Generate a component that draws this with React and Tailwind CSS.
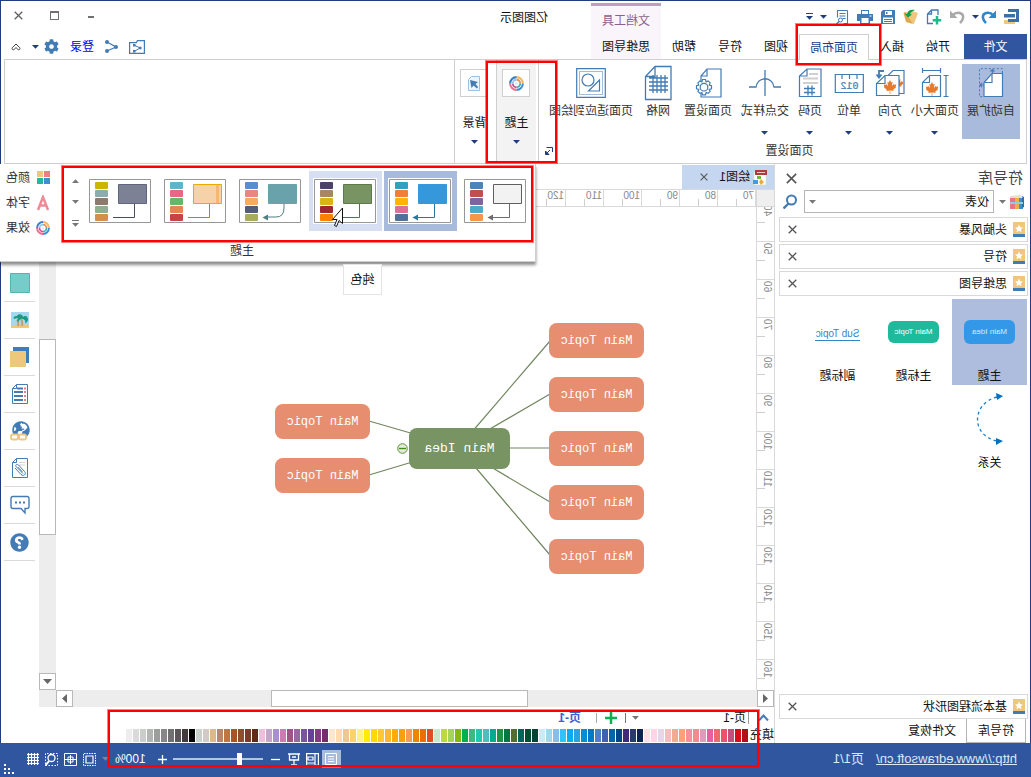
import React from "react";
import { FaCanadianMapleLeaf, FaQuestionCircle, FaGlobeAmericas, FaCog } from "react-icons/fa";

const BLUE = "#437bb5";

const Caret = ({ className = "text-[#1f3d7a]", up = false }) => (
  <svg width="7" height="4" viewBox="0 0 7 4" className={"shrink-0 " + className} aria-hidden="true">
    <path d={up ? "M0 4h7L3.500 .3z" : "M0 0h7L3.500 3.700z"} fill="currentColor" />
  </svg>
);

const Cross = ({ size = 9, className = "text-[#555]" }) => (
  <svg width={size} height={size} viewBox="0 0 9 9" className={className} aria-hidden="true">
    <path d="M.7 .7l7.600 7.600M8.300 .7L.7 8.300" stroke="currentColor" strokeWidth="1.300" fill="none" />
  </svg>
);

const Swirl = ({ size = 16 }) => (
  <svg width={size} height={size} viewBox="0 0 16 16" fill="none" aria-hidden="true">
    <path d="M8 1.200A6.800 6.800 0 0 0 1.200 8" stroke="#f3b95b" strokeWidth="2.200" />
    <path d="M1.200 8A6.800 6.800 0 0 0 8 14.800" stroke="#3d8fd1" strokeWidth="2.200" />
    <path d="M8 14.800A6.800 6.800 0 0 0 14.800 8" stroke="#e8738a" strokeWidth="2.200" />
    <path d="M14.800 8A6.800 6.800 0 0 0 8 1.200" stroke="#3a7fc0" strokeWidth="2.200" />
    <path d="M8 4A4 4 0 0 0 4 8" stroke="#ee8d5d" strokeWidth="2" />
    <path d="M4 8A4 4 0 0 0 8 12" stroke="#36b5a8" strokeWidth="2" />
    <path d="M8 12A4 4 0 0 0 12 8" stroke="#c1588f" strokeWidth="2" />
    <path d="M12 8A4 4 0 0 0 8 4" stroke="#8fc5ec" strokeWidth="2" />
    <circle cx="8" cy="8" r="1.500" fill="#d9ecf8" />
  </svg>
);

const quick = [
  ["新建", <svg key="n" width="16" height="16" viewBox="0 0 16 16" fill="none"><path d="M4 6V1h6.500L14.500 5v9.500H9M10.500 1v4h4" stroke={BLUE} strokeWidth="1.300" /><path d="M5 7v8.500M.8 11.200h8.500" stroke="#1dba8c" strokeWidth="2.500" /></svg>],
  ["打开", <svg key="o" width="16" height="16" viewBox="0 0 16 16"><path d="M1 4l6-2 1 2 6-1-2 9-7 3z" fill="#eec77f" /><path d="M14 3l1.500 1-2.500 9-7 2z" fill="#dca94e" /><path d="M4 1c4-1 7 0 8 4l2.500-.5-3.500 4-4-3 2-.5C8 3 6 2 4 1z" fill="#12a04b" /></svg>],
  ["保存", <svg key="s" width="16" height="16" viewBox="0 0 16 16"><path d="M1 1h12l2 2v12H1z" fill={BLUE} /><path d="M4 2h7v4H4zM3 8.500h10V14H3z" fill="#fff" /><path d="M8.500 3h1.500v2H8.500zM4 10h8v1H4zM4 12h8v1H4z" fill={BLUE} /></svg>],
  ["打印", <svg key="p" width="16" height="16" viewBox="0 0 16 16"><path d="M4 1h8v4h4v7h-3v3H3v-3H0V5h4z" fill={BLUE} /><path d="M5 2h6v3H5zM4.500 9h7v5h-7z" fill="#fff" /><path d="M1.500 6.500h2v1h-2z" fill="#fff" /></svg>],
  ["预览", <svg key="v" width="16" height="16" viewBox="0 0 16 16" fill="none"><path d="M2.500 1.500h10v7M2.500 1.500v13h4M4.500 4.500h6M4.500 7h6M4.500 9.500h3" stroke={BLUE} strokeWidth="1.100" /><circle cx="9.500" cy="11" r="2" stroke={BLUE} /><path d="M11 12.500l2.500 2.500" stroke={BLUE} strokeWidth="1.500" /></svg>],
];

const Leaf = ({ x, y, s = 13 }) => <FaCanadianMapleLeaf x={x} y={y} size={s} color="#e57b2e" />;

const tools = [
  { label: "自动扩展", width: "w-[58px]", active: true, icon: (
    <svg width="26" height="30" viewBox="0 0 26 30" fill="none" stroke={BLUE}>
      <path d="M1.500 5.500h10.500l8 9v14H1.500z" fill="#fff" strokeWidth="1.200" />
      <path d="M12 5.500v9h8" strokeWidth="1.200" />
      <path d="M1.500 5V.7h23v28H20" strokeDasharray="2 2" />
      <path d="M11.500 5V1.500M9.500 3.500l2-2 2 2M20 17h4M22 15l2 2-2 2" strokeWidth="1.200" />
    </svg>) },
  { label: "页面大小", width: "w-[54px]", caret: true, icon: (
    <svg width="28" height="30" viewBox="0 0 28 30" fill="none" stroke={BLUE} strokeWidth="1.200">
      <path d="M8.500 2.500h18M8.500 0v5M26.500 0v5M3 7.500v21M.5 7.500h5M.5 28.500h5" />
      <path d="M8.500 7.500h11l7 7v14h-18zM19.500 7.500v7h7" />
      <g stroke="none"><Leaf x={10} y={14} s={14} /></g>
    </svg>) },
  { label: "方向", width: "w-[36px]", caret: true, icon: (
    <svg width="30" height="30" viewBox="0 0 30 30" fill="none" stroke={BLUE} strokeWidth="1.200">
      <path d="M1 2.500h11l6 6v17H1z" />
      <g stroke="none"><Leaf x={1} y={10} s={11} /></g>
      <path d="M6 7.500h14l8.500 8v12H6z" fill="#fff" /><path d="M20 7.500v8h8.500" />
      <g stroke="none"><Leaf x={8} y={12} s={14} /></g>
      <path d="M21 3h5v6M23.500 6.500l2.500 3 2.500-3" strokeWidth="1.800" />
    </svg>) },
  { label: "单位", width: "w-[46px]", caret: true, icon: (
    <svg width="30" height="30" viewBox="0 0 30 30" fill="none" stroke={BLUE} strokeWidth="1.200">
      <path d="M.7 6.500h28v18H.7zM7 7v4M14.500 7v4M22 7v4" />
      <text x="14.500" y="21" textAnchor="middle" fontSize="10" fontFamily="Liberation Mono, monospace" fill={BLUE} strokeWidth=".2">012</text>
    </svg>) },
  { label: "页码", width: "w-[32px]", caret: true, icon: (
    <svg width="24" height="30" viewBox="0 0 24 30" fill="none" stroke={BLUE} strokeWidth="1.200">
      <path d="M1 1h14l7.500 7v20.500H1zM15 1v7h7.500" />
      <path d="M4 6h9M4 10.500h15M4 15h15" stroke="#cfcfcf" strokeWidth="2" />
      <path d="M10 17.500v10M14 17.500v10M7 20.500h11M7 24.500h11" strokeWidth="1.300" />
    </svg>) },
  { label: "交点样式", width: "w-[58px]", caret: true, icon: (
    <svg width="34" height="30" viewBox="0 0 34 30" fill="none" stroke={BLUE} strokeWidth="1.300">
      <path d="M17 2v26M1 19h7c2-11 16-11 18 0h7" />
    </svg>) },
  { label: "页面设置", width: "w-[56px]", icon: (
    <svg width="28" height="32" viewBox="0 0 28 32" fill="none" stroke={BLUE} strokeWidth="1.200">
      <path d="M1 2h14l6 7v21H1zM15 2v7h6" />
      <path d="M16.500 12.500h3l.6 2.300 2-.9 2 2-.9 2.100 2.300.7v3l-2.300.7.9 2-2 2-2-.9-.6 2.300h-3l-.6-2.300-2 .9-2-2 .9-2-2.300-.7v-3l2.300-.7-.9-2.100 2-2 2 .9z" fill="#fff" />
      <circle cx="18" cy="20.200" r="3.800" />
    </svg>) },
  { label: "网格", width: "w-[44px]", icon: (
    <svg width="28" height="36" viewBox="0 0 28 36" fill="none" stroke={BLUE} strokeWidth="1.300">
      <path d="M1 1.500h16l9.500 10v23H1zM17 1.500v10h9.500M4 13h19M4 17h19M4 21h19M4 25h19M7 10v18M11 10v18M15 10v18M19 10v18" />
    </svg>) },
  { label: "页面适应到绘图", width: "w-[90px]", icon: (
    <svg width="30" height="30" viewBox="0 0 30 30" fill="none" stroke={BLUE} strokeWidth="1.200">
      <path d="M.7 .7h28.600v28.600H.7z" />
      <path d="M3.500 3.500h23v23h-23z" strokeDasharray="1 1" strokeWidth="1" />
      <circle cx="18" cy="12" r="6" /><path d="M6.500 12v11h11z" />
    </svg>) },
];

const themes = [
  { fill: "#f2f2f2", line: "#6c6c6c", stroke: "#5f5f5f", arrow: true, sw: ["#4f81bd", "#c0504d", "#8064a2", "#4bacc6", "#f79646"], cell: "" },
  { fill: "#3498db", line: "#2a76a5", stroke: "#3498db", arrow: true, sw: ["#2fa2c0", "#f07f35", "#ffb400", "#de6f9b", "#51719a"], cell: "bg-[#a9bbdd]" },
  { fill: "#789463", line: "#55753f", stroke: "#5f7a4a", arrow: false, sw: ["#4b4169", "#a98566", "#d8b616", "#9b2833", "#ff8000"], cell: "bg-[#d6e0f2]" },
  { fill: "#69a2aa", line: "#4e7f85", stroke: "#69a2aa", arrow: true, round: true, sw: ["#5b8dcc", "#e98583", "#f7ab5f", "#535e76", "#a8ab5b"], cell: "" },
  { fill: "#f6d2aa", line: "#b08a10", stroke: "#eaaa00", arrow: false, band: "#f3b875", sw: ["#60b3cd", "#e96880", "#67b76b", "#e68651", "#c84343"], cell: "" },
  { fill: "#7d8196", line: "#4a4f60", stroke: "#5f6480", arrow: false, sw: ["#ccb400", "#8aacac", "#8c7a6c", "#8eb090", "#d2904b"], cell: "" },
];

const Thumb = ({ t }) => (
  <svg width="64" height="46" viewBox="-1 -1 64 46" fill="none">
    <path d="M-1-1h64v46H-1z" fill="#fff" />
    <path d="M.5 .5h61v43H.5z" stroke="#979797" />
    <path d="M4.500 5.500h28v19h-28z" fill={t.fill} stroke={t.stroke} />
    {t.band && <path d="M7 6h3v18H7z" fill={t.band} />}
    {t.sw.map((c, i) => <rect key={c} x="43" y={3 + i * 8} width="13" height="7" rx="1" fill={c} />)}
    <path d={t.round ? "M17 25v4q0 9 8 9h9" : "M16.500 25v13.500H38"} stroke={t.line} />
    {t.arrow && <path d="M33 35.500v6l5.500-3z" fill={t.line} />}
  </svg>
);

const swatches = "b30d1a dc0c1d c4507c e9546b f0696f e85fa0 e29abb f08d8c f29199 ffa07a f2ab93 f6bdbd e8d5e8 ffd5e6 fde0e4 0b2350 253a6e 402a7c 004588 0066a8 3d63ae 4f80c5 007ac8 008dd2 2aa4de 00aff0 2dc4f8 87bfea 9dd8ee cde9f4 004433 005030 006657 556b2f 007a42 1e9444 00ab96 4dbdc0 1dcaae 3eb87c 00b04f 7fba16 a6d25f bcd845 cde8c9 e14e23 f06c00 f08300 f59b57 f3a20a ffad00 fbb53a fdc931 ffd800 ffec00 fdf286 fdd26c edc88f ffdcab fde6d0 752a74 863a86 6a3f98 7a549e 9a66a4 a0528a cd7bb2 a88fd0 c5a5cb eebfdb 5f2a1c 7a3a2c 924e2c a85424 c2763f b8866c dfb888 d2cac5 c9d2ca 000000 433a3c 5a5658 707070 878787 9c9e9c b3b5b3 cbcdcb dadada ededed".split(" ");

const StarBook = () => (
  <svg width="12" height="15" viewBox="0 0 12 15" aria-hidden="true">
    <path d="M0 0h12v12H0z" fill="#eec67c" /><path d="M0 12h12v3H0z" fill={BLUE} />
    <path d="M6 2.500l1.200 2.700 2.800.3-2.100 1.900.6 2.800L6 8.700l-2.500 1.500.6-2.800L2 5.500l2.800-.3z" fill="#fff" />
  </svg>
);

const Category = ({ name }) => (
  <div className="flex h-[25px] items-center border border-[#d9d9d9] bg-white pr-2 pl-0.5">
    <StarBook />
    <span className="ml-1.5 flex-1">{name}</span>
    <button aria-label={"关闭" + name}><Cross /></button>
  </div>
);

const sideIcons = [
  ["填充", <svg key="a" width="20" height="20"><path d="M.5 .5h19v19H.5z" fill="#75ccc8" stroke="#52b5b0" /></svg>],
  ["图片", <svg key="b" width="20" height="18" viewBox="0 0 20 18"><path d="M1 1h18v16H1z" fill="#a5d8ee" /><path d="M1 14q9-2 18 1v2H1z" fill="#eec67c" /><path d="M8 15q-1-5 2-9M12 15q-1-4 1-6" stroke="#c99a68" strokeWidth="1.800" fill="none" /><path d="M2 9c0-4 3-5 5-3 0-3 5-4 6-1 3 0 4 1 3 3-2-1-3-1-4-1 1 2 1 3 0 4-2-3-3-4-5-3s-3 2-2 4c-2 0-2-1-3-3z" fill="#1a9a80" /></svg>],
  ["图层", <svg key="c" width="20" height="20"><path d="M1 0h16v16H1z" fill={BLUE} /><path d="M4 4h16v16H4z" fill="#eec67c" /></svg>],
  ["备注", <svg key="d" width="18" height="20" viewBox="0 0 18 20" fill="none"><path d="M1.500 .5h11l4 4v15h-15zM12.500 .5v4h4" stroke={BLUE} /><path d="M6 4.500h6M6 8h9M6 12h9M6 16h9" stroke={BLUE} strokeWidth="2" /><path d="M3 4.500h2M3 8h2M3 12h2M3 16h2" stroke="#ea7f8b" strokeWidth="2" /></svg>],
  ["超链接", <span key="e" className="relative block h-5 w-5"><FaGlobeAmericas size={18} color={BLUE} /><svg className="absolute right-0 bottom-0" width="17" height="8" viewBox="0 0 17 8" fill="none" stroke="#eec67c" strokeWidth="1.800"><rect x="1" y="1.500" width="7" height="5" rx="1.500" fill="#fff" /><rect x="9" y="1.500" width="7" height="5" rx="1.500" fill="#fff" /></svg></span>],
  ["附件", <svg key="f" width="18" height="20" viewBox="0 0 18 20" fill="none"><path d="M1.500 .5h11l4 4v15h-15zM12.500 .5v4h4" stroke={BLUE} /><path d="M4 4.500h6M4 7h6" stroke="#d5d5d5" /><path d="M6 15.500l6.500-6.500c2-2-.5-3.500-2-2l-6 6.500c-2.500 2.500 1 5.500 3.500 3l6-6.500M6.500 14l4.500-4.800" stroke={BLUE} /></svg>],
  ["批注", <svg key="g" width="20" height="20" viewBox="0 0 20 20" fill="none"><path d="M3 1.500h14q2 0 2 2v8q0 2-2 2H9L5 18v-4.500H3q-2 0-2-2v-8q0-2 2-2z" stroke={BLUE} strokeWidth="1.400" /><path d="M5 6.500h2v2H5zM9 6.500h2v2H9zM13 6.500h2v2h-2z" fill={BLUE} /></svg>],
  ["帮助", <FaQuestionCircle key="h" size={19} color={BLUE} />],
];

const topics = [
  "left-[112px] top-[116px]", "left-[112px] top-[170px]", "left-[112px] top-[224px]",
  "left-[112px] top-[278px]", "left-[112px] top-[332px]", "left-[386px] top-[197px]", "left-[386px] top-[251px]",
];

const hTicks = [70, 80, 90, 100, 110, 120, 130, 140, 150, 160, 170, 180, 190, 200];
const vTicks = [40, 50, 60, 70, 80, 90, 100, 110, 120, 130, 140, 150, 160];
const redBox = "pointer-events-none absolute z-30 border-2 border-[#ff0000] ring-1 ring-[#ff0000]/50";

export default function App() {
  return (
    <div className="relative flex min-h-screen -scale-x-100 flex-col overflow-hidden bg-white font-['Liberation_Sans','Noto_Sans_CJK_SC',sans-serif] text-xs leading-4 text-[#111]">
      <header className="border-x border-t border-[#1f3d7a]">
        <div className="flex h-[33px]">
          <div className="flex w-[369px] items-center gap-[7px] pl-2.5 pb-0.5">
            <svg width="16" height="16" viewBox="0 0 16 16"><path d="M5 11h11v4H5z" fill="#eec67c" /><path d="M1 0h11v3H1zM1 0h3v13H1zM5 5h11v3.500H5zM1 10h11v3H1z" fill="#3c6ea8" /></svg>
            <div className="flex w-[25px] items-center gap-[2px]">
              <button aria-label="撤销"><svg width="16" height="16" viewBox="0 0 16 16" fill="none"><path d="M3.500 6.500C8 1.500 15 4 14 9c-.3 2-1.500 3.500-3 5" stroke="#2f86c9" strokeWidth="2.500" /><path d="M1 1.500V9h7.500z" fill="#2f86c9" /></svg></button>
              <Caret />
            </div>
            <button aria-label="重做"><svg width="16" height="16" viewBox="0 0 16 16" fill="none"><path d="M12.500 6.500C8 1.500 1 4 2 9c.3 2 1.500 3.500 3 5" stroke="#a9a9a9" strokeWidth="2.500" /><path d="M15 1.500V9H7.500z" fill="#a9a9a9" /></svg></button>
            {quick.map(([n, i]) => <button key={n} aria-label={n}>{i}</button>)}
            <Caret />
            <span className="flex flex-col gap-0.5"><i className="block h-px w-[7px] bg-[#444]" /><Caret /></span>
          </div>
          <div className="mt-0.5 w-[70px] border-t-[3px] border-[#c59bc5] bg-[#faf5fa] pt-[7px] text-center leading-4 text-[#8f5f90]">文档工具</div>
          <h1 className="ml-[43px] flex-1 pt-[9px] leading-4">亿图图示</h1>
          <div className="flex text-[#707070]">
            <button className="grid w-9 place-items-center pb-0.5" aria-label="最小化"><i className="block h-0.5 w-1.5 bg-[#707070]" /></button>
            <button className="grid w-9 place-items-center pb-1" aria-label="最大化"><i className="block h-[9px] w-[9px] border border-t-2 border-[#707070]" /></button>
            <button className="grid w-9 place-items-center pb-1" aria-label="关闭"><Cross className="text-[#606060]" /></button>
          </div>
        </div>
        <div className="flex h-[25px] items-stretch">
          <button className="mr-[3px] ml-[3px] w-[63px] bg-[#3056a0] text-white">文件</button>
          <nav className="flex items-stretch">
            <button className="px-[11px]">开始</button>
            <button className="px-[11px]">插入</button>
            <button className="relative z-10 -mb-px border border-b-0 border-[#cfcfcf] bg-white px-[10px] text-[#1f3d8a]">页面布局</button>
            <button className="px-[11px]">视图</button>
            <button className="px-[11px]">符号</button>
            <button className="px-[11px]">帮助</button>
            <button className="bg-[#faf5fa] px-[11px]">思维导图</button>
          </nav>
          <div className="flex flex-1 items-center justify-end gap-[11px] pr-2.5">
            <button aria-label="分享到文件夹"><svg width="16" height="14" viewBox="0 0 16 14" fill="none"><path d="M.6 .6h7l1 2h6.800v10.800H.6z" stroke={BLUE} strokeWidth="1.200" /><path d="M11 5l-6 3 6 3.500" stroke={BLUE} /><path d="M9.500 4h2.500v2.500H9.500zM3.500 6.800H6v2.400H3.500zM9.500 10h2.500v2.500H9.500z" fill={BLUE} /></svg></button>
            <button aria-label="分享"><svg width="13" height="13" viewBox="0 0 13 13" fill="none"><path d="M11 2L2 7l9 4" stroke={BLUE} strokeWidth="1.300" /><circle cx="11" cy="2" r="2" fill={BLUE} /><circle cx="2" cy="7" r="2" fill={BLUE} /><circle cx="11" cy="11" r="2" fill={BLUE} /></svg></button>
            <a href="#login" className="text-[#0000ee]">登录</a>
            <button className="flex items-center gap-[5px]" aria-label="设置"><FaCog size={15} color={BLUE} /><Caret /></button>
            <button aria-label="收起功能区"><svg width="10" height="8" viewBox="0 0 10 8" fill="none" stroke="#444"><path d="M1 5.500q0-1 1-1.500l3-3 3 3q1 .5 1 1.500t-1.500 1.500L5 4.500 2.500 7Q1 6.500 1 5.500z" /></svg></button>
          </div>
        </div>
        <div className="mx-[3px] flex h-[105px] border border-[#cfcfcf]">
          <section className="flex w-[488px] flex-col border-r border-[#cfcfcf] text-[#333]">
            <div className="mt-1 ml-1.5 flex h-[75px]">
              {tools.map((t) => (
                <button key={t.label} className={"flex shrink-0 flex-col items-center pt-[3px] " + t.width + (t.active ? " bg-[#a9bbdd]" : "")}>
                  <span className="flex h-8 items-center justify-center">{t.icon}</span>
                  <span className="mt-1 leading-4 whitespace-nowrap">{t.label}</span>
                  {t.caret && <Caret className="mt-3 text-[#1f3d7a]" />}
                </button>
              ))}
            </div>
            <div className="flex h-6 items-center pr-1.5">
              <span className="flex-1 text-center">页面设置</span>
              <button aria-label="页面设置选项"><svg width="8" height="8" viewBox="0 0 8 8" fill="none" stroke="#1f3d7a"><path d="M.5 5V.5H6.500M3 3l3 3" /><path d="M7.500 4v3.500H4z" fill="#1f3d7a" /></svg></button>
            </div>
          </section>
          <button className="ml-0.5 flex w-10 flex-col items-center border-r border-[#cfcfcf] bg-[#f3f3f3] pt-[9px]">
            <span className="grid h-7 w-7 place-items-center border border-[#cfcfcf] bg-white"><Swirl size={15} /></span>
            <span className="mt-[18px]">主题</span>
            <Caret className="mt-[9px] text-[#1f3d7a]" />
          </button>
          <button className="flex w-[42px] flex-col items-center border-r border-[#cfcfcf] pt-[9px] pl-0.5">
            <span className="grid h-7 w-7 place-items-center border border-[#cfcfcf] bg-white"><svg width="12" height="15" viewBox="0 0 12 15" fill="none"><path d="M.5 .5h8l3 3v11H.5z" stroke="#9fbfe0" fill="#eef4fb" /><path d="M10 4l-1.500 8-2-2.500L3 12.500l-1-1.500 2.500-3L2 6z" fill={BLUE} /></svg></span>
            <span className="mt-[18px]">背景</span>
            <Caret className="mt-[9px] text-[#1f3d7a]" />
          </button>
        </div>
      </header>

      <section className="absolute top-[164px] right-0 z-20 flex h-[98px] w-[536px] border-b border-l border-[#cfcfcf] bg-white shadow-[0_3px_3px_rgba(0,0,0,0.45)]">
        <div className="flex w-[474px] flex-col">
          <div className="mt-[7px] ml-[3px] flex h-[60px] gap-0.5">
            {themes.map((t, i) => (
              <button key={i} aria-label={"主题 " + (i + 1)} className={"grid w-[73px] shrink-0 place-items-center " + t.cell}><Thumb t={t} /></button>
            ))}
            <div className="flex w-3 flex-col items-center justify-between pt-2 pb-1 text-[#777]">
              <button aria-label="上一行" className="grid h-1"><Caret up className="text-[#777]" /></button>
              <button aria-label="下一行" className="grid h-1"><Caret className="text-[#777]" /></button>
              <button aria-label="更多主题" className="flex flex-col gap-0.5"><i className="block h-px w-[7px] bg-[#777]" /><Caret className="text-[#777]" /></button>
            </div>
          </div>
          <span className="mt-3 ml-[281px] leading-4 text-[#333]">主题</span>
        </div>
        <div className="flex flex-1 flex-col gap-[5px] pt-1 pl-5 text-[#333]">
          <button className="flex h-5 items-center gap-1.5 whitespace-nowrap"><svg width="14" height="14" className="shrink-0"><path d="M0 0h6v6H0z" fill="#ea7f8b" /><path d="M7 0h6v6H7z" fill="#eec67c" /><path d="M0 7h6v6H0z" fill="#3d8fd1" /><path d="M7 7h6v6H7z" fill="#1dba9c" /></svg>颜色<Caret /></button>
          <button className="flex h-5 items-center gap-1.5 whitespace-nowrap"><svg width="14" height="16" viewBox="0 0 14 16" className="shrink-0" fill="none" stroke="#ee8b98" strokeWidth="2.500"><path d="M2 15L7 2l5 13M4 10.500h6" /></svg>字体<Caret /></button>
          <button className="flex h-5 items-center gap-1.5 whitespace-nowrap"><span className="shrink-0"><Swirl size={14} /></span>效果<Caret /></button>
        </div>
      </section>
      <div role="tooltip" className="absolute top-[264px] right-[343px] z-20 grid h-[31px] w-[39px] place-items-center border border-[#e4e4e4] bg-white">纯色</div>
      <svg className="absolute top-[207px] right-[331px] z-20" width="14" height="21" viewBox="0 0 14 21" aria-hidden="true"><path d="M2.500 1v15.500l3.500-3 2.500 6 2-1-2.500-6h4.500z" fill="#fff" stroke="#111" /></svg>

      <main className="flex flex-1 border-x border-[#1f3d7a]">
        <aside className="flex w-[256px] flex-col border-r border-[#d9d9d9] pr-1 pl-0.5">
          <div className="flex h-[26px] items-center justify-between pr-[7px] pl-[5px] pt-0.5 text-[15px] text-[#444]"><h2>符号库</h2><button aria-label="关闭符号库"><Cross size={11} /></button></div>
          <div className="mb-1 flex h-[23px] items-center pr-1 pl-1">
            <svg width="15" height="16" viewBox="0 0 15 16"><path d="M1 4h4v11H1z" fill="#3d8fd1" /><path d="M0 3l2-1v12l-2-1z" fill="#2d6fab" /><path d="M5 4h4v11H5z" fill="#f3b03f" /><path d="M9 3h5v12H9z" fill="#e8738a" /><path d="M1 4l3-3 10 1v2z" fill="#e9dcc8" /><path d="M1 8h13v2H1z" fill="#8fd0e0" /></svg>
            <span className="mr-[5px] ml-[3px]"><Caret className="text-[#777]" /></span>
            <div className="relative flex flex-1">
              <select aria-label="符号分类" className="h-[23px] w-full appearance-none border border-[#b5b5b5] bg-white pl-1" defaultValue="仪表"><option>仪表</option></select>
              <span className="pointer-events-none absolute top-2.5 right-[5px]"><Caret className="block text-[#777]" /></span>
            </div>
            <button aria-label="搜索" className="ml-1.5"><svg width="15" height="15" viewBox="0 0 15 15" fill="none" stroke={BLUE}><circle cx="6.500" cy="6" r="4.500" strokeWidth="2" /><path d="M9.500 9.500l5 5" strokeWidth="2.400" /></svg></button>
          </div>
          <div className="flex flex-col gap-0.5"><Category name="头脑风暴" /><Category name="符号" /><Category name="思维导图" /></div>
          <div className="mt-[3px] ml-px grid grid-cols-[75px_75px_75px] gap-x-px">
            <button className="flex h-[86px] flex-col items-center bg-[#aebcde]"><span className="mt-[21px] grid h-6 w-[51px] place-items-center rounded-md bg-[#3498e8] text-[8px] leading-3 text-[#d6ebfb]">Main Idea</span><span className="mt-6">主题</span></button>
            <button className="flex h-[86px] flex-col items-center"><span className="mt-[22px] grid h-[22px] w-[51px] place-items-center rounded-md bg-[#1fba9b] text-[8px] leading-3 text-white">Main Topic</span><span className="mt-[25px]">主标题</span></button>
            <button className="flex h-[86px] flex-col items-center"><span className="mt-7 h-[14px] border-b border-[#2f86c9] px-px text-[10px] leading-[14px] text-[#2f86c9]">Sub Topic</span><span className="mt-[27px]">副标题</span></button>
            <button className="flex h-[86px] flex-col items-center"><svg className="mt-[7px]" width="30" height="54" viewBox="0 0 30 54" fill="none"><path d="M7 5C32 11 34 43 7 49" stroke="#1f7fc6" strokeWidth="1.300" strokeDasharray="3 3" /><path d="M1 4l7-3-1 7zM1 49l7-3v7z" fill="#0070c0" /></svg><span className="mt-[9px]">关系</span></button>
          </div>
          <div className="mt-auto"><Category name="基本流程图形状" /></div>
          <div className="flex h-6 pl-0.5">
            <button className="w-[60px] border border-t-0 border-[#b5b5b5]">符号库</button>
            <button className="px-2.5">文件恢复</button>
          </div>
        </aside>

        <div className="flex min-w-0 flex-1 flex-col">
          <div className="flex h-[25px] pt-px">
            <div className="flex w-[92px] items-center bg-[#c5d7f0] pl-1.5">
              <svg width="16" height="15" viewBox="0 0 16 15"><path d="M2 2h12v13H2z" fill="#fff" stroke="#cdd9c8" strokeWidth=".6" /><path d="M1 0h12v5H1z" fill="#b23a3a" /><path d="M3 2h8v1H3z" fill="#f0c8c8" /><path d="M7 6h4v3H7z" fill="#6dbb45" /><path d="M4 12l3-3 2 3-2 3z" fill="#f3a83c" /><path d="M10 10h5v4h-5z" fill="#3d9be8" /></svg>
              <span className="ml-0.5 flex-1">绘图1</span>
              <button className="mr-[18px]" aria-label="关闭绘图1"><Cross size={8} /></button>
            </div>
          </div>
          <div className="flex h-[18px] overflow-hidden border-y border-[#d9d9d9]">
            <div className="w-[18px] shrink-0 border-r border-[#d9d9d9] bg-[#efefef]" />
            {hTicks.map((n) => (
              <div key={n} className="flex w-[38px] shrink-0 items-end border-l border-[#d9d9d9]">
                <span className="w-[18px] self-start pl-px text-[10px] leading-3 whitespace-nowrap text-[#888]">{n}</span>
                <i className="h-[7px] w-px bg-[#cfcfcf]" />
              </div>
            ))}
          </div>
          <div className="flex flex-1">
            <div className="relative w-[18px] shrink-0 overflow-hidden border-r border-[#d9d9d9]">
              <div className="absolute inset-x-0 -top-1">
                {vTicks.map((n) => (
                  <div key={n} className="relative h-[38px] border-t border-[#d9d9d9]">
                    <span className="absolute top-px left-px rotate-180 text-[10px] leading-3 text-[#888] [writing-mode:vertical-rl]">{n}</span>
                    <i className="absolute top-[18px] right-0 h-px w-2 bg-[#cfcfcf]" />
                  </div>
                ))}
              </div>
            </div>
            <div className="relative min-h-[480px] flex-1 overflow-hidden bg-white">
              <svg className="absolute inset-0" width="690" height="480" fill="none" stroke="#71875f" strokeWidth="1.200" aria-hidden="true">
                <path d="M206 134L297 240M206 187L297 240M206 241h40M206 295L297 241M206 348L297 241M387 214L297 240M387 268L297 241" />
              </svg>
              {topics.map((p) => <div key={p} className={"absolute grid h-[35px] w-[95px] place-items-center rounded-lg bg-[#e78d70] font-['Liberation_Mono',monospace] text-[12px] text-white " + p}>Main Topic</div>)}
              <div className="absolute top-[221px] left-[246px] grid h-[41px] w-[101px] place-items-center rounded-lg bg-[#789463] font-['Liberation_Mono',monospace] text-[13px] text-white">Main Idea</div>
              <svg className="absolute top-[236px] left-[348px]" width="11" height="11" viewBox="0 0 11 11"><circle cx="5.500" cy="5.500" r="4.800" fill="#e4e8df" stroke="#57962f" /><path d="M2 5.500h7" stroke="#3f8a10" strokeWidth="1.300" /></svg>
            </div>
            <div className="flex w-[17px] flex-col bg-[#ededed]">
              <div className="mt-[132px] h-[196px] border border-[#b8b8b8] bg-white" />
              <button aria-label="向下滚动" className="mt-auto grid h-[17px] place-items-center border border-[#b8b8b8] bg-white"><svg width="9" height="5"><path d="M0 0h9L4.500 5z" fill="#666" /></svg></button>
            </div>
          </div>
          <div className="flex h-[17px] bg-[#ededed]">
            <button aria-label="向左滚动" className="grid w-[17px] place-items-center border border-[#b8b8b8] bg-white"><svg width="5" height="9"><path d="M5 0v9L0 4.500z" fill="#666" /></svg></button>
            <div className="ml-[229px] w-[257px] border border-[#b8b8b8] bg-white" />
            <button aria-label="向右滚动" className="mr-[17px] ml-auto grid w-[17px] place-items-center border border-[#b8b8b8] bg-white"><svg width="5" height="9"><path d="M0 0v9L5 4.500z" fill="#666" /></svg></button>
          </div>
          <div className="flex h-[21px] items-center pl-[5px]">
            <svg width="11" height="7" fill="none"><path d="M1 6.500l4.500-5 4.500 5" stroke={BLUE} strokeWidth="2" /></svg>
            <i className="ml-[9px] h-3 w-px bg-[#999]" />
            <span className="ml-0.5 w-[107px]">页-1</span>
            <Caret className="text-[#777]" />
            <i className="ml-[6px] h-2.5 w-px bg-[#777]" />
            <button aria-label="新建页" className="ml-2"><svg width="12" height="12"><path d="M6 0v12M0 6h12" stroke="#0fb053" strokeWidth="2.500" /></svg></button>
            <i className="ml-2 h-2.5 w-px bg-[#aaa]" />
            <button className="ml-[15px] font-bold text-[#4160d0]">页-1</button>
          </div>
          <div className="flex h-[15px] items-start overflow-hidden">
            <span className="mr-0.5 w-6 shrink-0 leading-[14px]">填充</span>
            <div className="flex gap-px pt-px">{swatches.map((c, i) => <button key={i} aria-label={"#" + c} className="h-[13px] w-1.5 shrink-0" style={{ backgroundColor: "#" + c }} />)}</div>
          </div>
        </div>

        <aside className="flex w-[38px] flex-col items-center pt-[101px]">
          {sideIcons.map(([n, i]) => <button key={n} aria-label={n} className="grid h-[37px] w-[31px] place-items-center border-b border-[#d9d9d9]">{i}</button>)}
        </aside>
      </main>

      <footer className="flex h-[34px] items-center bg-[#3056a0] pr-[27px] pb-0.5 pl-3.5 text-[13px] text-[#dfe8f7]">
        <a href="http://www.edrawsoft.cn/" className="underline">http://www.edrawsoft.cn/</a>
        <span className="ml-3 flex-1">页1/1</span>
        <div className="flex items-center text-white">
          <button aria-label="普通视图" className="grid h-[18px] w-[19px] place-items-center bg-[#a9bbdd]"><svg width="12" height="12" fill="none" stroke="#fff"><path d="M.5 .5h11v11H.5zM3 3.500h6M3 6h6M3 8.500h6" /></svg></button>
          <button aria-label="页面视图" className="ml-[3px]"><svg width="13" height="13" fill="none" stroke="#fff" strokeWidth="1.200"><path d="M.6 .6h11.800v11.800H.6zM4 0v13M6 4h5v3H6zM4 10h8" /></svg></button>
          <button aria-label="演示" className="ml-1.5"><svg width="12" height="13" fill="none" stroke="#fff" strokeWidth="1.300"><path d="M0 1h12M1.500 1v6h9V1M6 7v4M3 12h6M4 4h4" /></svg></button>
          <button aria-label="缩小" className="ml-2"><svg width="9" height="9"><path d="M0 4.500h9" stroke="#fff" strokeWidth="1.300" /></svg></button>
          <input aria-label="缩放" type="range" defaultValue="24" className="ml-2 h-3 w-[90px] appearance-none bg-transparent [&::-webkit-slider-runnable-track]:h-0.5 [&::-webkit-slider-runnable-track]:bg-[#b8c4dd] [&::-webkit-slider-thumb]:-mt-[5px] [&::-webkit-slider-thumb]:h-3 [&::-webkit-slider-thumb]:w-[5px] [&::-webkit-slider-thumb]:appearance-none [&::-webkit-slider-thumb]:bg-white" />
          <button aria-label="放大" className="ml-1.5"><svg width="9" height="9"><path d="M0 4.500h9M4.500 0v9" stroke="#fff" strokeWidth="1.300" /></svg></button>
          <span className="ml-3 text-xs leading-4">100%</span>
          <Caret className="mr-1.5 ml-1.5 text-[#7d84a0]" />
          <button aria-label="适合页面" className="mr-1.5"><svg width="13" height="13" fill="none" stroke="#fff"><path d="M.5 .5h12v12H.5z" strokeDasharray="1.500 1" /><path d="M3 3h7v7H3z" strokeWidth="1.200" /></svg></button>
          <button aria-label="适合宽度" className="mr-1.5"><svg width="13" height="13" fill="none" stroke="#fff"><path d="M.5 .5h12v12H.5zM4 4v5M9 4v5M1 6.500h11M6.500 2v9M4 4h5M4 9h5" /></svg></button>
          <button aria-label="缩放区域" className="mr-1.5"><svg width="13" height="13" fill="none" stroke="#fff"><path d="M.5 .5h12v12H.5z" strokeDasharray="1.500 1.500" /><circle cx="6.500" cy="5" r="3.500" strokeWidth="1.300" /><path d="M9 8l4 5" strokeWidth="2" /></svg></button>
          <button aria-label="网格"><svg width="12" height="12" fill="none" stroke="#fff" strokeWidth="1.200"><path d="M0 1.500h12M0 4.500h12M0 7.500h12M0 10.500h12M1.500 0v12M4.500 0v12M7.500 0v12M10.500 0v12" /></svg></button>
        </div>
        <svg className="absolute right-1 bottom-[3px]" width="10" height="10" fill="#fff" aria-hidden="true"><path d="M8 0h2v2H8zM8 4h2v2H8zM4 4h2v2H4zM8 8h2v2H8zM4 8h2v2H4zM0 8h2v2H0z" /></svg>
      </footer>

      <div className={redBox + " top-[24px] left-[150px] h-[41px] w-[85px]"} />
      <div className={redBox + " top-[61px] left-[474px] h-[102px] w-[71px]"} />
      <div className={redBox + " top-[166px] right-[62px] h-[76px] w-[471px]"} />
      <div className={redBox + " right-[108px] bottom-[10px] left-[272px] h-[57px]"} />
    </div>
  );
}
